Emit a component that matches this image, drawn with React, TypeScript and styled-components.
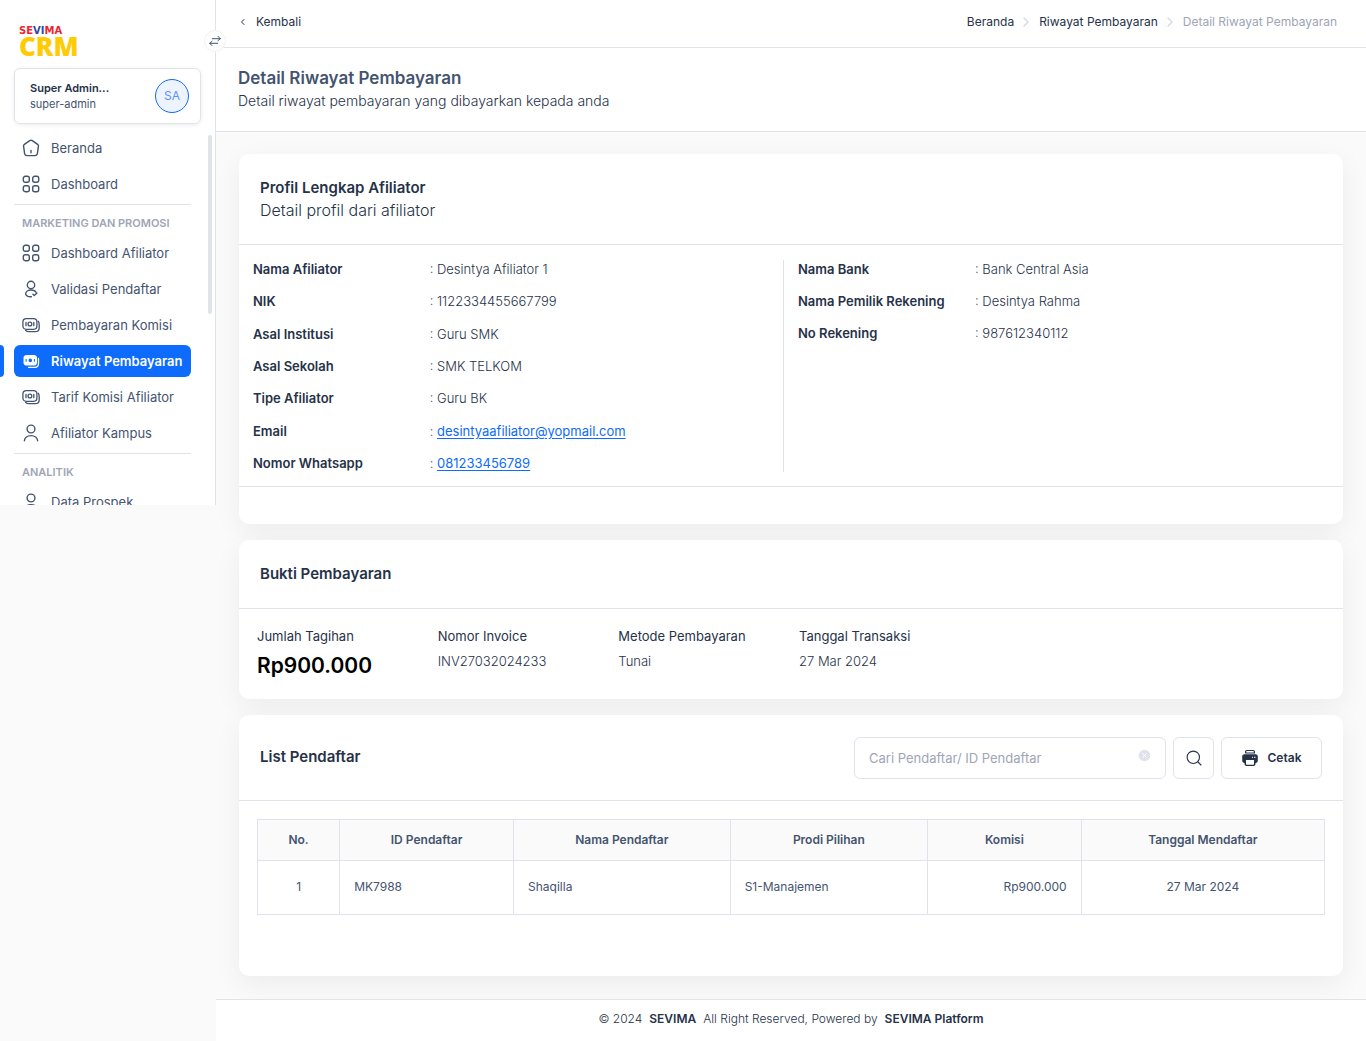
import React from "react";
import styled, { createGlobalStyle, css } from "styled-components";

const ink = "#263248";
const slate = "#44546f";
const muted = "#a0a5b5";
const line = "#e1e3ea";
const blue = "#0d6bfd";

const GlobalStyle = createGlobalStyle`
  *, *::before, *::after { box-sizing: border-box; }
  body {
    margin: 0;
    background: #fafafa;
    color: ${ink};
    font-family: Inter, "Open Sans", sans-serif;
    font-size: 12px;
    line-height: 18px;
  }
  button, input { font: inherit; color: inherit; }
  h1, h2, p, ul, ol, dl, dd { margin: 0; padding: 0; }
  ul, ol { list-style: none; }
`;

/* ---------- Shell ---------- */

const Shell = styled.div`
  display: flex;
  align-items: flex-start;
  min-height: 100vh;
`;

const Sidebar = styled.aside`
  position: relative;
  z-index: 1;
  flex: 0 0 216px;
  display: flex;
  flex-direction: column;
  height: 505px;
  background: #fff;
  border-right: 1px solid ${line};
`;

const Page = styled.div`
  flex: 1;
  min-width: 0;
  min-height: 100vh;
  display: flex;
  flex-direction: column;
`;

/* ---------- Sidebar ---------- */

const Logo = styled.a`
  display: flex;
  flex-direction: column;
  padding: 26px 0 0 19px;
  text-decoration: none;
  height: 68px;
`;

const LogoTop = styled.span`
  font: 700 10px/10px "DejaVu Sans", sans-serif;
  color: #ee2430;
`;

const LogoBlue = styled.span`
  color: #2c4ba0;
`;

const LogoMain = styled.span`
  font: 800 26px/20px "Open Sans", sans-serif;
  color: #ffcb05;
`;

const Toggle = styled.button`
  position: absolute;
  top: 30px;
  right: -11px;
  display: flex;
  align-items: center;
  justify-content: center;
  width: 22px;
  height: 22px;
  padding: 0;
  border: 1px solid #f1f1f4;
  border-radius: 50%;
  background: #fff;
  color: ${slate};
`;

const UserCard = styled.div`
  display: flex;
  align-items: center;
  justify-content: space-between;
  flex: 0 0 56px;
  margin: 0 14px;
  padding: 0 11px 0 15px;
  border: 1px solid ${line};
  border-radius: 6px;
  box-shadow: 0 1px 4px rgba(0, 0, 0, 0.08);
`;

const UserName = styled.p`
  font-size: 11px;
  font-weight: 600;
  line-height: 16px;
`;

const UserRole = styled.p`
  font-size: 11px;
  line-height: 16px;
  color: ${slate};
`;

const Avatar = styled.span`
  display: flex;
  align-items: center;
  justify-content: center;
  width: 34px;
  height: 34px;
  border: 1px solid ${blue};
  border-radius: 50%;
  background: #eef4ff;
  color: #5b93f8;
`;

const Nav = styled.nav`
  flex: 1;
  min-height: 0;
  overflow: hidden;
  padding: 8px 24px 0 14px;
`;

const NavList = styled.ul`
  display: grid;
  gap: 4px;
`;

const NavHeading = styled.h2`
  height: 33px;
  margin-top: 4px;
  padding: 9px 0 0 8px;
  border-top: 1px solid ${line};
  color: ${muted};
  font-size: 11px;
  font-weight: 600;
  line-height: 18px;
`;

const NavLink = styled.a<{ $active?: boolean }>`
  position: relative;
  display: flex;
  align-items: center;
  gap: 11px;
  height: 32px;
  padding-left: 8px;
  border-radius: 6px;
  color: ${slate};
  font-size: 13px;
  white-space: nowrap;
  text-decoration: none;
  ${(p) =>
    p.$active &&
    css`
      background: ${blue};
      color: #fff;
      font-weight: 600;
      &::before {
        content: "";
        position: absolute;
        left: -14px;
        width: 4px;
        height: 32px;
        border-radius: 0 4px 4px 0;
        background: ${blue};
      }
    `}
`;

const ScrollThumb = styled.span`
  position: absolute;
  top: 135px;
  right: 3px;
  width: 4px;
  height: 179px;
  border-radius: 2px;
  background: ${line};
`;

/* ---------- Top of page ---------- */

const TopBar = styled.header`
  display: flex;
  align-items: center;
  justify-content: space-between;
  height: 48px;
  padding: 0 29px 4px 24px;
  background: #fff;
  border-bottom: 1px solid ${line};
`;

const BackLink = styled.a`
  display: flex;
  align-items: center;
  gap: 10px;
  color: ${ink};
  text-decoration: none;
`;

const Crumbs = styled.ol`
  display: flex;
`;

const Crumb = styled.li`
  display: flex;
  align-items: center;
  color: ${muted};
  a {
    color: ${ink};
    text-decoration: none;
  }
  svg {
    margin: 0 8px 0 7px;
    color: #d5d8e0;
  }
`;

const PageHead = styled.div`
  padding: 18px 22px 20px;
  background: #fff;
  border-bottom: 1px solid ${line};
`;

const PageTitle = styled.h1`
  color: ${slate};
  font-size: 17px;
  font-weight: 600;
  line-height: 24px;
`;

const PageSub = styled.p`
  font-size: 14px;
  font-weight: 300;
  line-height: 20px;
  padding-top: 1px;
`;

/* ---------- Cards ---------- */

const Content = styled.main`
  display: grid;
  gap: 16px;
  padding: 22px 23px;
`;

const Card = styled.section`
  background: #fff;
  border-radius: 10px;
  box-shadow: 0 8px 28px rgba(0, 0, 0, 0.06);
`;

const CardTitle = styled.h2`
  font-size: 15px;
  font-weight: 600;
  line-height: 23px;
`;

const CardHead = styled.div<{ $height: number }>`
  display: flex;
  align-items: center;
  justify-content: space-between;
  gap: 24px;
  min-height: ${(p) => p.$height}px;
  padding: 0 21px;
  border-bottom: 1px solid ${line};
  > ${CardTitle} {
    padding-bottom: 2px;
  }
`;

const CardSub = styled.p`
  font-size: 16px;
  font-weight: 300;
  line-height: 23px;
`;

const CardFoot = styled.div`
  height: 38px;
  border-top: 1px solid ${line};
`;

const ProfileBody = styled.div`
  display: grid;
  grid-template-columns: 1fr 1fr;
  min-height: 241px;
  padding: 15px 7px 14px;
  font-size: 13px;
`;

const Details = styled.dl<{ $divided?: boolean; $spread?: boolean }>`
  display: flex;
  flex-direction: column;
  gap: 14px;
  margin: 0 7px;
  justify-content: ${(p) => (p.$spread ? "space-between" : "flex-start")};
  border-right: ${(p) => (p.$divided ? `1px solid ${line}` : "0")};
`;

const Detail = styled.div`
  display: grid;
  grid-template-columns: 1fr 2fr;
  dt {
    font-weight: 600;
  }
  dd {
    font-weight: 300;
  }
  a {
    color: ${blue};
    font-weight: 400;
    text-underline-offset: 2px;
  }
`;

const PaymentGrid = styled.dl`
  display: grid;
  grid-template-columns: repeat(6, 1fr);
  padding: 18px 10px 17px;
  font-size: 13px;
`;

const PaymentCell = styled.div<{ $large?: boolean }>`
  padding: 0 8px;
  white-space: nowrap;
  dt {
    margin-bottom: ${(p) => (p.$large ? 4 : 7)}px;
  }
  dd {
    font-weight: 300;
    ${(p) =>
      p.$large &&
      css`
        color: #000;
        font-size: 21px;
        font-weight: 600;
        line-height: 33px;
      `}
  }
`;

/* ---------- List ---------- */

const Tools = styled.form`
  display: flex;
  gap: 7px;
`;

const SearchBox = styled.div`
  display: flex;
  align-items: center;
  width: 312px;
  height: 42px;
  padding: 0 14px;
  border: 1px solid ${line};
  border-radius: 6px;
`;

const SearchInput = styled.input`
  flex: 1;
  min-width: 0;
  border: 0;
  outline: 0;
  padding: 0;
  background: transparent;
  font-size: 13px;
  &::placeholder {
    color: ${muted};
    opacity: 1;
  }
`;

const ClearButton = styled.button`
  display: flex;
  padding: 0 0 4px;
  border: 0;
  background: none;
`;

const ToolButton = styled.button<{ $wide?: boolean }>`
  display: flex;
  align-items: center;
  justify-content: center;
  gap: 10px;
  width: ${(p) => (p.$wide ? 101 : 41)}px;
  padding: 0;
  border: 1px solid ${line};
  border-radius: 6px;
  background: #fff;
  font-weight: 600;
`;

const TableWrap = styled.div`
  padding: 18px 18px 61px;
`;

const Table = styled.table`
  width: 100%;
  table-layout: fixed;
  border-collapse: collapse;
  color: ${slate};
  th,
  td {
    border: 1px solid ${line};
    padding: 0 14px;
  }
  th {
    height: 41px;
    background: #fafafa;
    font-weight: 600;
  }
  td {
    height: 54px;
    padding-bottom: 2px;
  }
`;

const Col = styled.col<{ $share: string }>`
  width: ${(p) => p.$share};
`;

const Cell = styled.td<{ $align: string }>`
  text-align: ${(p) => p.$align};
`;

const Footer = styled.footer`
  display: flex;
  justify-content: center;
  gap: 7px;
  margin-top: auto;
  padding: 10px 0 13px;
  border-top: 1px solid ${line};
  background: #fff;
  font-weight: 300;
  b {
    font-weight: 600;
  }
`;

/* ---------- Icons ---------- */

const Icon = styled.svg.attrs((p) => ({
  fill: "none",
  stroke: p.stroke ?? "currentColor",
  strokeWidth: p.strokeWidth ?? "1.4",
  strokeLinecap: "round" as const,
  strokeLinejoin: "round" as const,
  "aria-hidden": true,
}))`
  flex: none;
  display: block;
`;

const HomeIcon = () => (
  <Icon width="18" height="18" viewBox="0 0 18 18">
    <path d="M7.7 1.6 2.4 5.4C1.7 5.9 1.4 6.6 1.6 7.400L2.600 14.600C2.900 16 3.700 16.600 5 16.600H13C14.300 16.600 15.100 16 15.400 14.600L16.400 7.400C16.600 6.600 16.300 5.900 15.600 5.400L10.300 1.600C9.500 1.100 8.500 1.100 7.700 1.600Z" />
    <path d="M9 11.500v2.200" />
  </Icon>
);

const GridIcon = () => (
  <Icon width="18" height="18" viewBox="0 0 18 18">
    <rect x="1.300" y="1.300" width="6" height="6" rx="2" />
    <rect x="10.700" y="1.300" width="6" height="6" rx="2" />
    <rect x="1.300" y="10.700" width="6" height="6" rx="2" />
    <rect x="10.700" y="10.700" width="6" height="6" rx="2" />
  </Icon>
);

const UserCheckIcon = () => (
  <Icon width="18" height="18" viewBox="0 0 18 18">
    <circle cx="9" cy="5" r="3.700" />
    <path d="M9.400 16.700C6.300 17.100 3.700 16 3.700 13.700c0-2.300 2.600-3.700 5.300-3.700 2.300 0 4.300.8 5 2.300" />
    <path d="m10.900 14.200 1.400 1.300 2.600-2.500" />
  </Icon>
);

const MoneyIcon = () => (
  <Icon width="18" height="18" viewBox="0 0 18 18" strokeWidth="1.300">
    <rect x=".9" y="2.700" width="14" height="10.600" rx="3.200" />
    <path d="M16.200 5.200c.7.700 1 1.700 1 3v3.500c0 2.600-1.400 4-4 4H7c-1.600 0-2.700-.4-3.400-1.300" />
    <circle cx="7.900" cy="8" r="1.900" />
    <path d="M4 6.300v3.400M11.800 6.300v3.400" />
  </Icon>
);

const MoneySolidIcon = () => (
  <Icon width="18" height="18" viewBox="0 0 18 18">
    <path
      fill="currentColor"
      stroke="none"
      fillRule="evenodd"
      d="M5 3h6.500C14 3 15 4.300 15 6v4.500c0 2-1 3.100-3.500 3.100H5c-2.500 0-3.500-1.100-3.500-3.100V6C1.500 4.300 2.500 3 5 3Zm3.300 3.600a1.800 1.800 0 1 0 0 3.600 1.800 1.800 0 0 0 0-3.600ZM3.600 7v2.800h1V7Zm8.300 0v2.800h1V7Z"
    />
    <path strokeWidth="1.300" d="M16.500 6.500v5c0 2.400-1.300 3.800-3.700 3.800H6.500" />
  </Icon>
);

const UserIcon = () => (
  <Icon width="18" height="18" viewBox="0 0 18 18">
    <circle cx="9" cy="5" r="3.900" />
    <path d="M2.400 16.700c0-3 3-5.100 6.600-5.100s6.600 2.100 6.600 5.100" />
  </Icon>
);

const SwapIcon = () => (
  <Icon width="12" height="12" viewBox="0 0 12 12" strokeWidth="1">
    <path d="M3.300 3.700h8M9 1.400l2.300 2.300L9 5.600M8.700 8.300h-8M3 6.400.7 8.300 3 10.600" />
  </Icon>
);

const BackIcon = () => (
  <Icon width="6" height="8" viewBox="0 0 6 8" strokeWidth="1">
    <path d="M4 1.500 1.500 4 4 6.500" />
  </Icon>
);

const ChevronIcon = () => (
  <Icon width="10" height="10" viewBox="0 0 10 10" strokeWidth="1.400">
    <path d="m3 1 4 4-4 4" />
  </Icon>
);

const ClearIcon = () => (
  <Icon width="13" height="13" viewBox="0 0 13 13">
    <circle cx="6.500" cy="6.500" r="5.800" fill={line} stroke="none" />
    <path stroke="#fff" strokeWidth="1" d="m4.800 4.800 3.400 3.400M8.200 4.800 4.800 8.200" />
  </Icon>
);

const SearchIcon = () => (
  <Icon width="16" height="16" viewBox="0 0 16 16" strokeWidth="1.100">
    <circle cx="7.300" cy="7.300" r="6.200" />
    <path d="m12 12 3 3" />
  </Icon>
);

const PrinterIcon = () => (
  <Icon width="16" height="16" viewBox="0 0 16 16" stroke="none">
    <path
      fill="currentColor"
      fillRule="evenodd"
      d="M4.800 0h6.400c1.100 0 1.800.7 1.800 1.800V3.500H3V1.800C3 .7 3.700 0 4.800 0Zm-.6 2.500h7.600V1.700c0-.4-.2-.6-.6-.6H4.800c-.4 0-.6.2-.6.6ZM2.500 4.300h11c1.500 0 2.300.9 2.300 2.300v4c0 1.500-.8 2.300-2.300 2.300V14c0 1.200-.8 2-2 2h-7c-1.200 0-2-.8-2-2v-1.100C1 12.900.2 12.100.2 10.600v-4c0-1.400.8-2.300 2.300-2.300ZM4 10v4c0 .5.200.8.700.8h6.600c.5 0 .7-.3.700-.8v-4Zm6-3.300v1h1v-1Zm2 0v1h1.500v-1Z"
    />
  </Icon>
);

/* ---------- Data ---------- */

const mainNav = [
  { label: "Beranda", icon: <HomeIcon /> },
  { label: "Dashboard", icon: <GridIcon /> },
];

const marketingNav = [
  { label: "Dashboard Afiliator", icon: <GridIcon /> },
  { label: "Validasi Pendaftar", icon: <UserCheckIcon /> },
  { label: "Pembayaran Komisi", icon: <MoneyIcon /> },
  { label: "Riwayat Pembayaran", icon: <MoneySolidIcon />, active: true },
  { label: "Tarif Komisi Afiliator", icon: <MoneyIcon /> },
  { label: "Afiliator Kampus", icon: <UserIcon /> },
];

const analyticsNav = [{ label: "Data Prospek", icon: <UserIcon /> }];

const profile = [
  { label: "Nama Afiliator", value: "Desintya Afiliator 1" },
  { label: "NIK", value: "1122334455667799" },
  { label: "Asal Institusi", value: "Guru SMK" },
  { label: "Asal Sekolah", value: "SMK TELKOM" },
  { label: "Tipe Afiliator", value: "Guru BK" },
  {
    label: "Email",
    value: "desintyaafiliator@yopmail.com",
    href: "mailto:desintyaafiliator@yopmail.com",
  },
  { label: "Nomor Whatsapp", value: "081233456789", href: "tel:081233456789" },
];

const bank = [
  { label: "Nama Bank", value: "Bank Central Asia" },
  { label: "Nama Pemilik Rekening", value: "Desintya Rahma" },
  { label: "No Rekening", value: "987612340112" },
];

const payment = [
  { label: "Jumlah Tagihan", value: "Rp900.000", large: true },
  { label: "Nomor Invoice", value: "INV27032024233" },
  { label: "Metode Pembayaran", value: "Tunai" },
  { label: "Tanggal Transaksi", value: "27 Mar 2024" },
];

const columns = [
  { title: "No.", share: "7.7%", align: "center" },
  { title: "ID Pendaftar", share: "16.3%", align: "left" },
  { title: "Nama Pendaftar", share: "20.3%", align: "left" },
  { title: "Prodi Pilihan", share: "18.5%", align: "left" },
  { title: "Komisi", share: "14.4%", align: "right" },
  { title: "Tanggal Mendaftar", share: "22.8%", align: "center" },
];

const rows = [
  ["1", "MK7988", "Shaqilla", "S1-Manajemen", "Rp900.000", "27 Mar 2024"],
];

type NavItem = { label: string; icon: React.ReactNode; active?: boolean };
type Entry = { label: string; value: string; href?: string };

const Menu = ({ items }: { items: NavItem[] }) => (
  <NavList>
    {items.map((item) => (
      <li key={item.label}>
        <NavLink
          href="#"
          $active={item.active}
          aria-current={item.active ? "page" : undefined}
        >
          {item.icon}
          {item.label}
        </NavLink>
      </li>
    ))}
  </NavList>
);

const Entries = ({ entries }: { entries: Entry[] }) => (
  <>
    {entries.map((entry) => (
      <Detail key={entry.label}>
        <dt>{entry.label}</dt>
        <dd>
          : {entry.href ? <a href={entry.href}>{entry.value}</a> : entry.value}
        </dd>
      </Detail>
    ))}
  </>
);

export default function App() {
  return (
    <>
      <GlobalStyle />
      <Shell>
        <Sidebar>
          <Logo href="#">
            <LogoTop>
              SE<LogoBlue>VI</LogoBlue>MA
            </LogoTop>
            <LogoMain>CRM</LogoMain>
          </Logo>
          <Toggle type="button" aria-label="Toggle menu">
            <SwapIcon />
          </Toggle>
          <UserCard>
            <div>
              <UserName>Super Admin...</UserName>
              <UserRole>super-admin</UserRole>
            </div>
            <Avatar>SA</Avatar>
          </UserCard>
          <Nav>
            <Menu items={mainNav} />
            <NavHeading>MARKETING DAN PROMOSI</NavHeading>
            <Menu items={marketingNav} />
            <NavHeading>ANALITIK</NavHeading>
            <Menu items={analyticsNav} />
          </Nav>
          <ScrollThumb />
        </Sidebar>

        <Page>
          <TopBar>
            <BackLink href="#">
              <BackIcon />
              Kembali
            </BackLink>
            <nav aria-label="Breadcrumb">
              <Crumbs>
                <Crumb>
                  <a href="#">Beranda</a>
                  <ChevronIcon />
                </Crumb>
                <Crumb>
                  <a href="#">Riwayat Pembayaran</a>
                  <ChevronIcon />
                </Crumb>
                <Crumb aria-current="page">Detail Riwayat Pembayaran</Crumb>
              </Crumbs>
            </nav>
          </TopBar>

          <PageHead>
            <PageTitle>Detail Riwayat Pembayaran</PageTitle>
            <PageSub>
              Detail riwayat pembayaran yang dibayarkan kepada anda
            </PageSub>
          </PageHead>

          <Content>
            <Card>
              <CardHead $height={91}>
                <div>
                  <CardTitle>Profil Lengkap Afiliator</CardTitle>
                  <CardSub>Detail profil dari afiliator</CardSub>
                </div>
              </CardHead>
              <ProfileBody>
                <Details $divided $spread>
                  <Entries entries={profile} />
                </Details>
                <Details>
                  <Entries entries={bank} />
                </Details>
              </ProfileBody>
              <CardFoot />
            </Card>

            <Card>
              <CardHead $height={69}>
                <CardTitle>Bukti Pembayaran</CardTitle>
              </CardHead>
              <PaymentGrid>
                {payment.map((item) => (
                  <PaymentCell key={item.label} $large={item.large}>
                    <dt>{item.label}</dt>
                    <dd>{item.value}</dd>
                  </PaymentCell>
                ))}
              </PaymentGrid>
            </Card>

            <Card>
              <CardHead $height={86}>
                <CardTitle>List Pendaftar</CardTitle>
                <Tools onSubmit={(e) => e.preventDefault()}>
                  <SearchBox>
                    <SearchInput
                      type="text"
                      aria-label="Cari Pendaftar/ ID Pendaftar"
                      placeholder="Cari Pendaftar/ ID Pendaftar"
                    />
                    <ClearButton type="reset" aria-label="Hapus">
                      <ClearIcon />
                    </ClearButton>
                  </SearchBox>
                  <ToolButton type="submit" aria-label="Cari">
                    <SearchIcon />
                  </ToolButton>
                  <ToolButton type="button" $wide>
                    <PrinterIcon />
                    Cetak
                  </ToolButton>
                </Tools>
              </CardHead>
              <TableWrap>
                <Table>
                  <colgroup>
                    {columns.map((c) => (
                      <Col key={c.title} $share={c.share} />
                    ))}
                  </colgroup>
                  <thead>
                    <tr>
                      {columns.map((c) => (
                        <th key={c.title} scope="col">
                          {c.title}
                        </th>
                      ))}
                    </tr>
                  </thead>
                  <tbody>
                    {rows.map((row) => (
                      <tr key={row[0]}>
                        {row.map((value, i) => (
                          <Cell key={columns[i].title} $align={columns[i].align}>
                            {value}
                          </Cell>
                        ))}
                      </tr>
                    ))}
                  </tbody>
                </Table>
              </TableWrap>
            </Card>
          </Content>

          <Footer>
            <span>© 2024</span>
            <b>SEVIMA</b>
            <span>All Right Reserved, Powered by</span>
            <b>SEVIMA Platform</b>
          </Footer>
        </Page>
      </Shell>
    </>
  );
}
